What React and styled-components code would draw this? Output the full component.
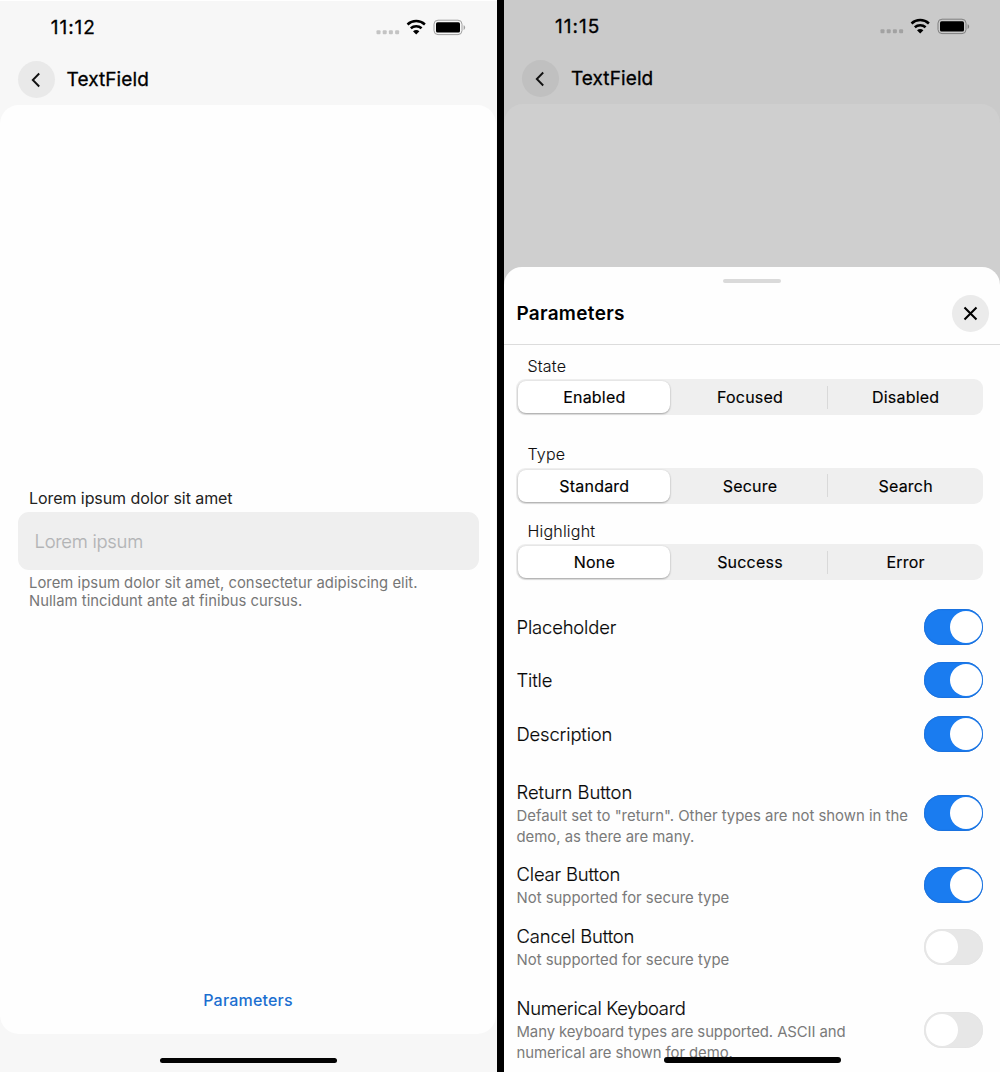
import React from "react";
import styled, { createGlobalStyle } from "styled-components";

const GlobalStyle = createGlobalStyle`
  * { box-sizing: border-box; }
  body { margin: 0; background: #000; font-family: Inter, "Liberation Sans", sans-serif; }
  p, h1, h2 { margin: 0; }
  button { font: inherit; border: 0; padding: 0; margin: 0; }
`;

const Stage = styled.main`
  width: 1000px;
  height: 1072px;
  display: grid;
  grid-template-columns: 496.5px 495.6px;
  column-gap: 7.9px;
  background: #000;
  overflow: hidden;
`;

const Screen = styled.section`
  position: relative;
  height: 1072px;
  display: flex;
  flex-direction: column;
  overflow: hidden;
  background: ${(p) => (p.$dimmed ? "#cacaca" : "#f7f7f7")};
  border-top: ${(p) => (p.$dimmed ? "0" : "1px solid #fff")};
`;

const StatusBar = styled.div`
  height: 53px;
  flex: none;
  display: flex;
  align-items: center;
  justify-content: space-between;
  padding: 0 ${(p) => (p.$dimmed ? "30px" : "31px")} 1px 50.7px;
`;

const Clock = styled.span`
  padding-top: 1.4px;
  font-size: 19px;
  font-weight: 400;
  -webkit-text-stroke: 0.3px #000;
  letter-spacing: 1px;
  line-height: 24px;
`;

const NavBar = styled.header`
  height: 51px;
  flex: none;
  display: flex;
  align-items: center;
  gap: 12px;
  padding: 0 17.5px;
`;

const RoundButton = styled.button`
  width: 37px;
  height: 37px;
  flex: none;
  border-radius: 50%;
  display: flex;
  align-items: center;
  justify-content: center;
  background: ${(p) => p.$fill};
`;

const NavTitle = styled.h1`
  padding-top: 1.6px;
  font-size: 19px;
  font-weight: 400;
  -webkit-text-stroke: 0.3px #000;
  letter-spacing: 0.1px;
  line-height: 24px;
`;

const Panel = styled.div`
  width: 496px;
  height: ${(p) => (p.$dimmed ? "968px" : "928.5px")};
  flex: none;
  display: flex;
  flex-direction: column;
  padding: 382px 17.5px 0;
  border-radius: 19px;
  background: ${(p) => (p.$dimmed ? "#cfcfcf" : "#fefefe")};
`;

const FieldTitle = styled.label`
  padding-left: 11.5px;
  font-size: 16px;
  font-weight: 400;
  letter-spacing: -0.07px;
  line-height: 22px;
  color: #222;
`;

const FieldBox = styled.div`
  height: 57.5px;
  margin: 3px 0 4px;
  padding: 0 17px;
  width: 461.5px;
  display: flex;
  align-items: center;
  border-radius: 11px;
  background: #efefef;
  color: #b2b3b5;
  font-size: 18.4px;
  font-weight: 300;
  -webkit-text-stroke: 0.15px #b2b3b5;
  letter-spacing: -0.25px;
`;

const FieldHint = styled.p`
  padding-left: 11.5px;
  font-size: 14.8px;
  font-weight: 400;
  letter-spacing: 0.04px;
  line-height: 18px;
  color: #767676;
  white-space: pre-line;
`;

const LinkButton = styled.button`
  margin: auto auto 22.5px;
  background: none;
  color: #1b6fd0;
  font-size: 16px;
  font-weight: 500;
  letter-spacing: 0.2px;
  line-height: 22px;
`;

const HomeIndicator = styled.div`
  position: absolute;
  left: 160px;
  bottom: ${(p) => p.$bottom}px;
  width: 177px;
  height: 5.5px;
  border-radius: 3px;
  background: #030303;
`;

const Sheet = styled.div`
  position: absolute;
  left: 0;
  right: 0;
  top: 267px;
  height: 805px;
  display: flex;
  flex-direction: column;
  border-radius: 18px 18px 0 0;
  background: #fefefe;
`;

const Grabber = styled.div`
  width: 58px;
  height: 4.5px;
  flex: none;
  margin: 11.7px auto 0;
  border-radius: 3px;
  background: #dadada;
`;

const SheetHeader = styled.div`
  height: 61.8px;
  flex: none;
  display: flex;
  align-items: center;
  justify-content: space-between;
  padding: 0 11px 0 12px;
  border-bottom: 1.4px solid #dcdcdc;
`;

const SheetTitle = styled.h2`
  font-size: 19px;
  font-weight: 600;
  letter-spacing: 0.3px;
  line-height: 24px;
`;

const SheetBody = styled.div`
  display: flex;
  flex-direction: column;
  padding: 10.2px 16.8px 0 12.1px;
`;

const Group = styled.div`
  display: flex;
  flex-direction: column;
  margin-bottom: ${(p) => p.$after}px;
`;

const GroupLabel = styled.span`
  padding-left: 11px;
  height: 24.3px;
  font-size: 16px;
  font-weight: 300;
  -webkit-text-stroke: 0.1px #101010;
  letter-spacing: 0.2px;
  line-height: 22px;
  color: #101010;
`;

const Segments = styled.div`
  width: 467px;
  height: 36px;
  display: grid;
  grid-template-columns: repeat(3, 1fr);
  align-items: center;
  border-radius: 9px;
  background: #efefef;
`;

const Segment = styled.div`
  height: ${(p) => (p.$active ? "32px" : "23px")};
  margin: ${(p) => (p.$active ? "0 2px" : "0")};
  display: flex;
  align-items: center;
  justify-content: center;
  font-size: 16px;
  font-weight: 400;
  -webkit-text-stroke: 0.15px #000;
  letter-spacing: 0.2px;
  line-height: 22px;
  border-radius: ${(p) => (p.$active ? "8px" : "0")};
  background: ${(p) => (p.$active ? "#fff" : "transparent")};
  box-shadow: ${(p) =>
    p.$active
      ? "0 1px 2px rgba(0,0,0,.3), 0 0 2px rgba(0,0,0,.08)"
      : p.$divided
      ? "-1px 0 0 #d9d9d9"
      : "none"};
`;

const OptionRow = styled.div`
  width: 467px;
  height: ${(p) => p.$height}px;
  margin-bottom: ${(p) => p.$after}px;
  display: flex;
  align-items: center;
  justify-content: space-between;
`;

const OptionText = styled.div`
  display: flex;
  flex-direction: column;
  gap: 1.7px;
  padding-top: ${(p) => (p.$noted ? "0.9px" : "0")};
`;

const OptionName = styled.span`
  font-size: 18.4px;
  font-weight: 300;
  -webkit-text-stroke: 0.15px #080808;
  letter-spacing: ${(p) => p.$tracking ?? -0.14}px;
  line-height: 24px;
  color: #080808;
`;

const OptionNote = styled.span`
  font-size: 14.9px;
  font-weight: 400;
  letter-spacing: ${(p) => p.$tracking ?? 0}px;
  line-height: 21px;
  color: #7a7a7a;
  white-space: pre;
`;

const Switch = styled.div`
  width: 59px;
  height: 36px;
  flex: none;
  padding: 1.5px;
  display: flex;
  justify-content: ${(p) => (p.$on ? "flex-end" : "flex-start")};
  align-items: center;
  border-radius: 18px;
  background: ${(p) => (p.$on ? "#1a7cf0" : "#e7e7e7")};
  box-shadow: inset 0 0 1px 0.5px ${(p) => (p.$on ? "#1a69cf" : "#e3e3e3")};
`;

const Knob = styled.div`
  width: 32px;
  height: 32px;
  border-radius: 50%;
  background: #fff;
`;

function StatusIcons({ dot, ring }) {
  return (
    <svg width="90" height="18" viewBox="375.5 18 90 18" fill="none">
      {[376, 382.2, 388.4, 394.6].map((x) => (
        <rect key={x} x={x} y="30.3" width="4" height="4" rx="1" fill={dot} />
      ))}
      <path d="M407 24.500a12.900 12.900 0 0 1 17.400 0" stroke="#000" strokeWidth="2.500" />
      <path d="M410.300 28.200a8.100 8.100 0 0 1 10.800 0" stroke="#000" strokeWidth="2.500" />
      <path d="M412.500 31.300a5 5 0 0 1 6.400 0l-3.200 3.100z" fill="#000" />
      <rect x="433.500" y="20.200" width="28" height="14.400" rx="4" stroke={ring} />
      <rect x="435.500" y="22.200" width="24" height="10.400" rx="1.600" fill="#000" />
      <path d="M463.100 25.200c2 .7 2 4 0 4.700z" fill={ring} />
    </svg>
  );
}

function BackIcon() {
  return (
    <svg width="14" height="16" viewBox="0 0 14 16" fill="none">
      <path d="M10.200 1.500L3.800 8l6.400 6.500" stroke="#111" strokeWidth="1.900" />
    </svg>
  );
}

function CloseIcon() {
  return (
    <svg width="15" height="15" viewBox="0 0 15 15" fill="none">
      <path d="M1.500 1.500l12 12M13.500 1.500l-12 12" stroke="#000" strokeWidth="2.100" />
    </svg>
  );
}

function TopChrome({ time, dimmed }) {
  return (
    <>
      <StatusBar $dimmed={dimmed}>
        <Clock>{time}</Clock>
        <StatusIcons dot={dimmed ? "#a2a2a2" : "#c4c4c4"} ring={dimmed ? "#7f7f7f" : "#a0a0a0"} />
      </StatusBar>
      <NavBar>
        <RoundButton $fill={dimmed ? "#c0c0c0" : "#e9e9e9"} aria-label="Back">
          <BackIcon />
        </RoundButton>
        <NavTitle>TextField</NavTitle>
      </NavBar>
    </>
  );
}

const groups = [
  { label: "State", items: ["Enabled", "Focused", "Disabled"], after: 28 },
  { label: "Type", items: ["Standard", "Secure", "Search"], after: 16.2 },
  { label: "Highlight", items: ["None", "Success", "Error"], after: 29.2 },
];

const options = [
  { name: "Placeholder", on: true, height: 36, after: 16.9 },
  { name: "Title", on: true, height: 36, after: 17.7 },
  { name: "Description", on: true, height: 36, after: 27.8 },
  {
    name: "Return Button",
    note: 'Default set to "return". Other types are not shown in the\ndemo, as there are many.',
    on: true,
    height: 67,
    after: 15.2,
    tracking: -0.02,
  },
  { name: "Clear Button", note: "Not supported for secure type", on: true, height: 46, after: 15.8 },
  { name: "Cancel Button", note: "Not supported for secure type", on: false, height: 46, after: 26.4 },
  {
    name: "Numerical Keyboard",
    note: "Many keyboard types are supported. ASCII and\nnumerical are shown for demo.",
    on: false,
    height: 67,
    after: 0,
    tracking: -0.28,
    noteTracking: -0.08,
  },
];

export default function App() {
  return (
    <Stage>
      <GlobalStyle />
      <Screen>
        <TopChrome time="11:12" />
        <Panel>
          <FieldTitle>Lorem ipsum dolor sit amet</FieldTitle>
          <FieldBox>Lorem ipsum</FieldBox>
          <FieldHint>
            {"Lorem ipsum dolor sit amet, consectetur adipiscing elit.\nNullam tincidunt ante at finibus cursus."}
          </FieldHint>
          <LinkButton>Parameters</LinkButton>
        </Panel>
        <HomeIndicator $bottom={8.7} />
      </Screen>
      <Screen $dimmed>
        <TopChrome time="11:15" dimmed />
        <Panel $dimmed />
        <Sheet>
          <Grabber />
          <SheetHeader>
            <SheetTitle>Parameters</SheetTitle>
            <RoundButton $fill="#ebebeb" aria-label="Close">
              <CloseIcon />
            </RoundButton>
          </SheetHeader>
          <SheetBody>
            {groups.map((g) => (
              <Group key={g.label} $after={g.after}>
                <GroupLabel>{g.label}</GroupLabel>
                <Segments>
                  {g.items.map((item, i) => (
                    <Segment key={item} $active={i === 0} $divided={i === 2}>
                      {item}
                    </Segment>
                  ))}
                </Segments>
              </Group>
            ))}
            {options.map((o) => (
              <OptionRow key={o.name} $height={o.height} $after={o.after}>
                <OptionText $noted={Boolean(o.note)}>
                  <OptionName $tracking={o.tracking}>{o.name}</OptionName>
                  {o.note && <OptionNote $tracking={o.noteTracking}>{o.note}</OptionNote>}
                </OptionText>
                <Switch $on={o.on}>
                  <Knob />
                </Switch>
              </OptionRow>
            ))}
          </SheetBody>
        </Sheet>
        <HomeIndicator $bottom={9.5} />
      </Screen>
    </Stage>
  );
}
